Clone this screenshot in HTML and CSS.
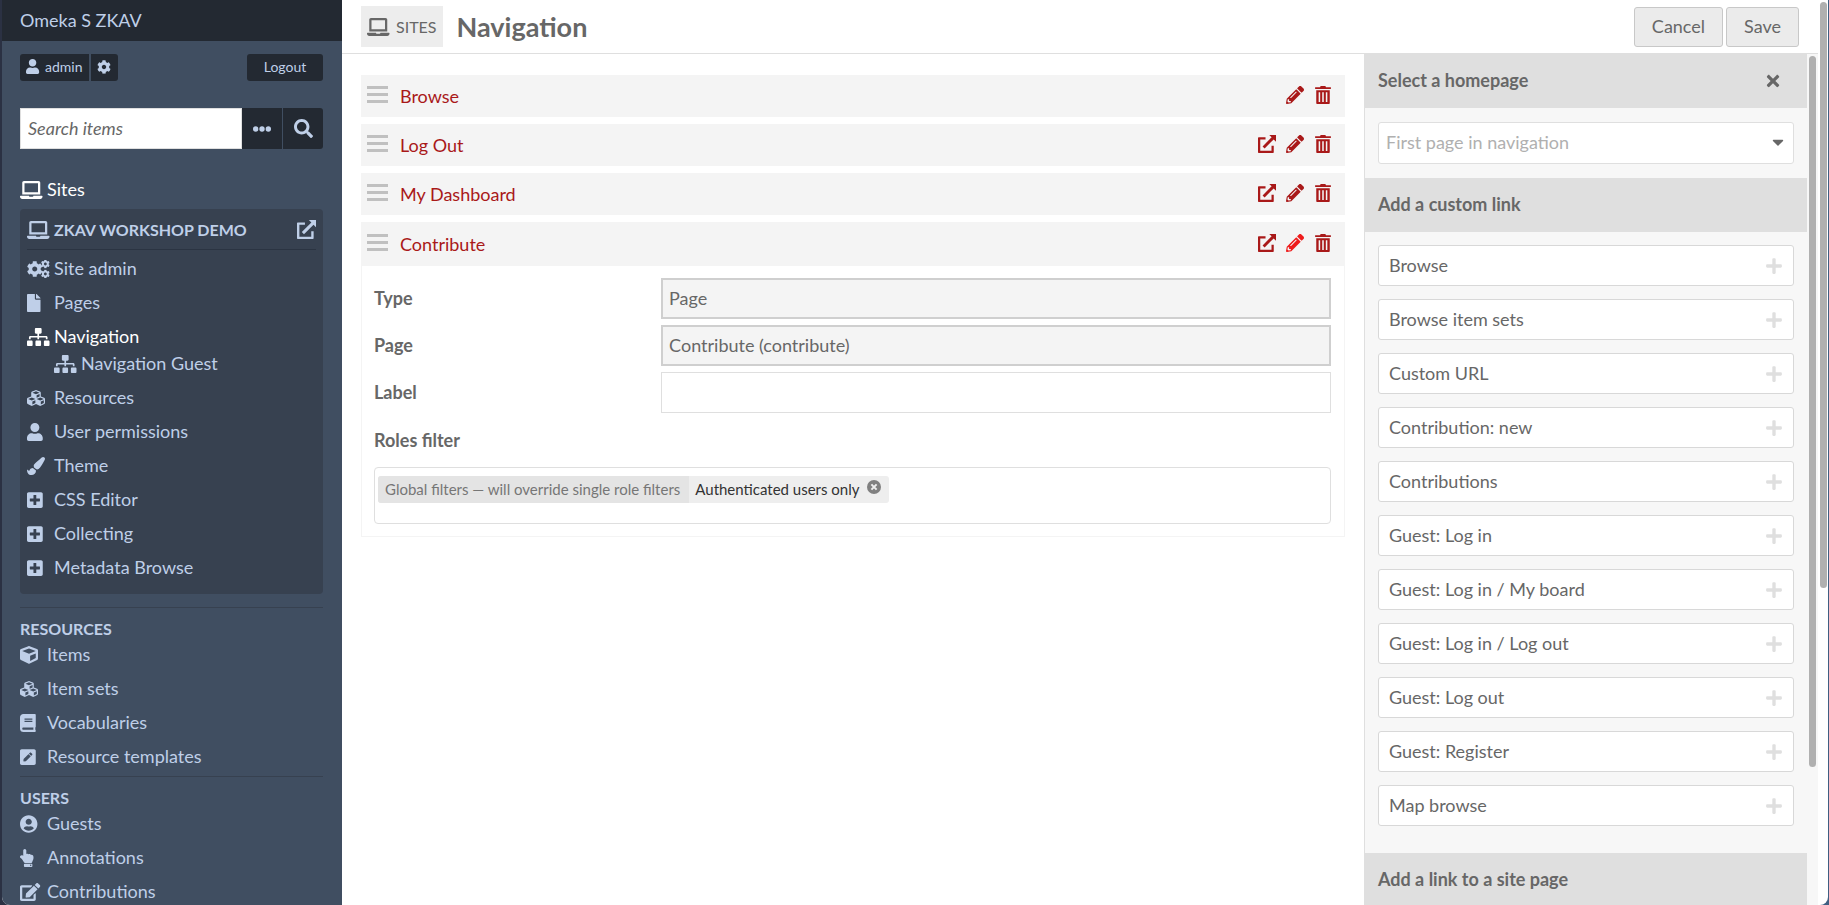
FILE: index.html
```
<!DOCTYPE html>
<html lang="en">
<head>
    <meta charset="UTF-8">
    <meta name="viewport" content="width=device-width, initial-scale=1.0">
    <title>Navigation - Omeka S ZKAV</title>
    <link rel="stylesheet" href="styles.css">
</head>
<body>

    <!-- icon set -->
    <svg class="icon-defs" aria-hidden="true">
        <symbol id="laptop" viewBox="0 0 640 512" preserveAspectRatio="xMinYMid"><path d="M624 416H381.54c-.74 19.81-14.71 32-32.74 32H288c-18.69 0-33.02-17.47-32.77-32H16c-8.8 0-16 7.2-16 16v16c0 35.2 28.8 64 64 64h512c35.2 0 64-28.8 64-64v-16c0-8.8-7.2-16-16-16zM576 48c0-26.4-21.6-48-48-48H112C85.6 0 64 21.6 64 48v336h512V48zm-64 272H128V64h384v256z"/></symbol>
        <symbol id="cog" viewBox="0 0 512 512" preserveAspectRatio="xMinYMid"><path d="M487.4 315.7l-42.6-24.6c4.3-23.2 4.3-47 0-70.2l42.6-24.6c4.9-2.8 7.1-8.6 5.5-14-11.1-35.6-30-67.8-54.7-94.6-3.8-4.1-10-5.1-14.8-2.3L380.8 110c-17.9-15.4-38.5-27.3-60.8-35.1V25.8c0-5.6-3.9-10.5-9.4-11.7-36.7-8.2-74.3-7.8-109.2 0-5.5 1.2-9.4 6.1-9.4 11.7V75c-22.2 7.9-42.8 19.8-60.8 35.1L88.7 85.5c-4.9-2.8-11-1.9-14.8 2.3-24.7 26.7-43.6 58.9-54.7 94.6-1.7 5.4.6 11.2 5.5 14L67.3 221c-4.3 23.2-4.3 47 0 70.2l-42.6 24.6c-4.9 2.8-7.1 8.6-5.5 14 11.1 35.6 30 67.8 54.7 94.6 3.8 4.1 10 5.1 14.8 2.3l42.6-24.6c17.9 15.4 38.5 27.3 60.8 35.1v49.2c0 5.6 3.9 10.5 9.4 11.7 36.7 8.2 74.3 7.8 109.2 0 5.5-1.2 9.4-6.1 9.4-11.7v-49.2c22.2-7.9 42.8-19.8 60.8-35.1l42.6 24.6c4.9 2.8 11 1.9 14.8-2.3 24.7-26.7 43.6-58.9 54.7-94.6 1.5-5.5-.7-11.3-5.6-14.1zM256 336c-44.1 0-80-35.9-80-80s35.9-80 80-80 80 35.9 80 80-35.9 80-80 80z"/></symbol>
        <symbol id="cogs" viewBox="0 0 640 512" preserveAspectRatio="xMinYMid"><use href="#cog" x="-10" y="26" width="460" height="460"/><use href="#cog" x="395" y="-14" width="255" height="255"/><use href="#cog" x="395" y="271" width="255" height="255"/></symbol>
        <symbol id="user" viewBox="0 0 448 512" preserveAspectRatio="xMinYMid"><path d="M224 256c70.7 0 128-57.3 128-128S294.7 0 224 0 96 57.3 96 128s57.3 128 128 128zm89.6 32h-16.7c-22.2 10.2-46.9 16-72.9 16s-50.6-5.8-72.9-16h-16.7C60.2 288 0 348.2 0 422.4V464c0 26.5 21.5 48 48 48h352c26.5 0 48-21.5 48-48v-41.6c0-74.2-60.2-134.4-134.4-134.4z"/></symbol>
        <symbol id="ellipsis" viewBox="0 0 512 512"><circle cx="76" cy="256" r="76"/><circle cx="256" cy="256" r="76"/><circle cx="436" cy="256" r="76"/></symbol>
        <symbol id="search" viewBox="0 0 512 512"><path d="M505 442.7L405.3 343c-4.5-4.5-10.6-7-17-7H372c27.6-35.3 44-79.7 44-128C416 93.1 322.9 0 208 0S0 93.1 0 208s93.1 208 208 208c48.3 0 92.7-16.4 128-44v16.3c0 6.4 2.5 12.5 7 17l99.7 99.7c9.4 9.4 24.6 9.4 33.9 0l28.3-28.3c9.4-9.4 9.4-24.6.1-34zM208 336c-70.7 0-128-57.2-128-128 0-70.7 57.2-128 128-128 70.7 0 128 57.2 128 128 0 70.7-57.2 128-128 128z"/></symbol>
        <symbol id="external" viewBox="0 0 512 512"><path d="M384 304v144H64V128h150V64H20C8 64 0 72 0 84v408c0 12 8 20 20 20h408c12 0 20-8 20-20V304zM320 0l67 67-257 257 58 58 257-257 67 67V0z"/></symbol>
        <symbol id="file" viewBox="0 0 384 512" preserveAspectRatio="xMinYMid"><path d="M224 136V0H24C10.7 0 0 10.7 0 24v464c0 13.3 10.7 24 24 24h336c13.3 0 24-10.7 24-24V160H248c-13.2 0-24-10.8-24-24zm160-14.1v6.1H256V0h6.1c6.4 0 12.5 2.5 17 7l97.9 98c4.5 4.5 7 10.6 7 16.9z"/></symbol>
        <symbol id="sitemap" viewBox="0 0 640 512" preserveAspectRatio="xMinYMid"><path d="M128 352H32c-17.67 0-32 14.33-32 32v96c0 17.67 14.33 32 32 32h96c17.67 0 32-14.33 32-32v-96c0-17.67-14.33-32-32-32zm-24-80h192v48h48v-48h192v48h48v-57.59c0-21.17-17.23-38.41-38.41-38.41H344v-64h40c17.67 0 32-14.33 32-32V32c0-17.67-14.33-32-32-32H256c-17.67 0-32 14.33-32 32v96c0 17.67 14.33 32 32 32h40v64H94.41C73.23 224 56 241.23 56 262.41V320h48v-48zm264 80h-96c-17.67 0-32 14.33-32 32v96c0 17.67 14.33 32 32 32h96c17.67 0 32-14.33 32-32v-96c0-17.67-14.33-32-32-32zm240 0h-96c-17.67 0-32 14.33-32 32v96c0 17.67 14.33 32 32 32h96c17.67 0 32-14.33 32-32v-96c0-17.67-14.33-32-32-32z"/></symbol>
        <symbol id="cube" viewBox="0 0 512 512" preserveAspectRatio="xMinYMid"><path d="M239.1 6.3l-208 78c-18.7 7-31.1 25-31.1 45v225.1c0 18.2 10.3 34.8 26.5 42.9l208 104c13.5 6.8 29.4 6.8 42.9 0l208-104c16.3-8.1 26.5-24.8 26.5-42.9V129.3c0-20-12.4-37.9-31.1-44.9l-208-78C262 2.2 250 2.2 239.1 6.3zM256 68.4l192 72v1.1l-192 78-192-78v-1.1l192-72zm32 356V275.5l160-65v133.9l-160 80z"/></symbol>
        <symbol id="cubes" viewBox="0 0 512 512" preserveAspectRatio="xMinYMid"><path d="M488.6 250.2L392 214V105.5c0-15-9.3-28.4-23.4-33.7l-100-37.5c-8.1-3.1-17.1-3.1-25.3 0l-100 37.5c-14.1 5.3-23.4 18.7-23.4 33.7V214l-96.6 36.2C9.3 255.5 0 268.9 0 283.9V394c0 13.6 7.7 26.1 19.9 32.2l100 50c10.1 5.1 22.1 5.1 32.2 0l103.9-52 103.9 52c10.1 5.1 22.1 5.1 32.2 0l100-50c12.2-6.1 19.9-18.6 19.9-32.2V283.9c0-15-9.3-28.4-23.4-33.7zM358 214.8l-85 31.9v-68.2l85-37v73.3zM154 104.1l102-38.2 102 38.2v.6l-102 41.4-102-41.4v-.6zm84 291.1l-85 42.5v-79.1l85-38.8v75.4zm0-112l-102 41.4-102-41.4v-.6l102-38.2 102 38.2v.6zm240 112l-85 42.5v-79.1l85-38.8v75.4zm0-112l-102 41.4-102-41.4v-.6l102-38.2 102 38.2v.6z"/></symbol>
        <symbol id="brush" viewBox="0 0 512 512" preserveAspectRatio="xMinYMid"><path d="M167.02 309.34c-40.12 2.58-76.53 17.86-97.19 72.3-2.35 6.21-8 9.98-14.59 9.98-11.11 0-45.46-27.67-55.25-34.35C0 439.62 37.93 512 128 512c75.86 0 128-43.77 128-120.19 0-3.11-.65-6.08-.97-9.13l-88.01-73.34zM457.89 0c-15.16 0-29.37 6.71-40.21 16.45C213.27 199.05 192 203.34 192 257.09c0 13.7 3.25 26.76 8.73 38.7l63.82 53.18c7.21 1.8 14.64 3.03 22.39 3.03 62.11 0 98.11-45.47 211.16-256.46 7.38-14.35 13.9-29.85 13.9-45.99C512 20.64 486 0 457.89 0z"/></symbol>
        <symbol id="plus-square" viewBox="0 0 448 512" preserveAspectRatio="xMinYMid"><path d="M400 32H48C21.5 32 0 53.5 0 80v352c0 26.5 21.5 48 48 48h352c26.5 0 48-21.5 48-48V80c0-26.5-21.5-48-48-48zm-32 252c0 6.6-5.4 12-12 12h-92v92c0 6.6-5.4 12-12 12h-56c-6.6 0-12-5.4-12-12v-92H92c-6.6 0-12-5.4-12-12v-56c0-6.6 5.4-12 12-12h92v-92c0-6.6 5.4-12 12-12h56c6.6 0 12 5.4 12 12v92h92c6.6 0 12 5.4 12 12v56z"/></symbol>
        <symbol id="book" viewBox="0 0 448 512" preserveAspectRatio="xMinYMid"><path d="M448 360V24c0-13.3-10.7-24-24-24H96C43 0 0 43 0 96v320c0 53 43 96 96 96h328c13.3 0 24-10.7 24-24v-16c0-7.5-3.5-14.3-8.9-18.7-4.2-15.4-4.2-59.3 0-74.7 5.4-4.3 8.9-11.1 8.9-18.6zM128 134c0-3.3 2.7-6 6-6h212c3.3 0 6 2.7 6 6v20c0 3.3-2.7 6-6 6H134c-3.3 0-6-2.7-6-6v-20zm0 64c0-3.3 2.7-6 6-6h212c3.3 0 6 2.7 6 6v20c0 3.3-2.7 6-6 6H134c-3.3 0-6-2.7-6-6v-20zm253.4 250H96c-17.7 0-32-14.3-32-32 0-17.6 14.4-32 32-32h285.4c-1.9 17.1-1.9 46.9 0 64z"/></symbol>
        <symbol id="pen-square" viewBox="0 0 448 512" preserveAspectRatio="xMinYMid"><path d="M400 480H48c-26.5 0-48-21.5-48-48V80c0-26.5 21.5-48 48-48h352c26.5 0 48 21.5 48 48v352c0 26.5-21.5 48-48 48zM238.1 177.9L102.4 313.6l-6.3 57.1c-.8 7.6 5.6 14.1 13.3 13.3l57.1-6.3L302.2 242c2.3-2.3 2.3-6.1 0-8.5L246.7 178c-2.5-2.4-6.3-2.4-8.6-.1zM345 165.1L314.9 135c-9.4-9.4-24.6-9.4-33.9 0l-23.1 23.1c-2.3 2.3-2.3 6.1 0 8.5l55.5 55.5c2.3 2.3 6.1 2.3 8.5 0L345 199c9.3-9.3 9.3-24.5 0-33.9z"/></symbol>
        <symbol id="user-circle" viewBox="0 0 496 512" preserveAspectRatio="xMinYMid"><path d="M248 8C111 8 0 119 0 256s111 248 248 248 248-111 248-248S385 8 248 8zm0 96c48.6 0 88 39.4 88 88s-39.4 88-88 88-88-39.4-88-88 39.4-88 88-88zm0 344c-58.7 0-111.3-26.6-146.5-68.2 18.8-35.4 55.6-59.8 98.5-59.8 2.4 0 4.8.4 7.1 1.1 13 4.2 26.6 6.9 40.9 6.9 14.3 0 28-2.7 40.9-6.9 2.3-.7 4.7-1.1 7.1-1.1 42.9 0 79.7 24.4 98.5 59.8C359.3 421.4 306.7 448 248 448z"/></symbol>
        <symbol id="hand" viewBox="0 0 384 512" preserveAspectRatio="xMinYMid"><path d="M135.652 0c23.625 0 43.826 20.65 43.826 44.8v99.851c17.048-16.34 49.766-18.346 70.944 6.299 22.829-14.288 53.017-2.147 62.315 16.45C361.878 158.426 384 189.346 384 240c0 2.746-.203 13.276-.195 16 .168 61.971-31.065 76.894-38.315 123.731C343.683 391.404 333.599 400 321.786 400H150.261l-.001-.002c-18.366-.011-35.889-10.607-43.845-28.464C93.421 342.648 57.377 276.122 29.092 264 10.897 256.203.008 242.616 0 224c-.014-34.222 35.098-57.752 66.908-44.119 8.359 3.583 16.67 8.312 24.918 14.153V44.8c0-23.45 20.543-44.8 43.826-44.8zM136 416h192c13.255 0 24 10.745 24 24v48c0 13.255-10.745 24-24 24H136c-13.255 0-24-10.745-24-24v-48c0-13.255 10.745-24 24-24zm168 28c-11.046 0-20 8.954-20 20s8.954 20 20 20 20-8.954 20-20-8.954-20-20-20z"/></symbol>
        <symbol id="edit" viewBox="0 0 576 512" preserveAspectRatio="xMinYMid"><path d="M402.6 83.2l90.2 90.2c3.8 3.8 3.8 10 0 13.8L274.4 405.6l-92.8 10.3c-12.4 1.4-22.9-9.1-21.5-21.5l10.3-92.8L388.8 83.2c3.8-3.8 10-3.8 13.8 0zm162-22.9l-48.8-48.8c-15.2-15.2-39.9-15.2-55.2 0l-35.4 35.4c-3.8 3.8-3.8 10 0 13.8l90.2 90.2c3.8 3.8 10 3.8 13.8 0l35.4-35.4c15.2-15.3 15.2-40 0-55.2zM384 346.2V448H64V128h229.8c3.2 0 6.2-1.3 8.5-3.5l40-40c7.6-7.6 2.2-20.5-8.5-20.5H48C21.5 64 0 85.5 0 112v352c0 26.5 21.5 48 48 48h352c26.5 0 48-21.5 48-48V306.2c0-10.7-12.9-16-20.5-8.5l-40 40c-2.2 2.3-3.5 5.3-3.5 8.5z"/></symbol>
        <symbol id="pencil" viewBox="0 0 512 512"><path d="M497.9 142.1l-46.1 46.1c-4.7 4.7-12.3 4.7-17 0l-111-111c-4.7-4.7-4.7-12.3 0-17l46.1-46.1c18.7-18.7 49.1-18.7 67.9 0l60.1 60.1c18.8 18.7 18.8 49.1 0 67.9zM284.2 99.8L21.6 362.4.4 483.9c-2.9 16.4 11.4 30.6 27.8 27.8l121.5-21.3 262.6-262.6c4.7-4.7 4.7-12.3 0-17l-111-111c-4.8-4.7-12.4-4.7-17.1 0zM124.1 339.9c-5.5-5.5-5.5-14.3 0-19.8l154-154c5.5-5.5 14.3-5.5 19.8 0s5.5 14.3 0 19.8l-154 154c-5.5 5.5-14.3 5.5-19.8 0zM88 424h48v36.3l-64.5 11.3-31.1-31.1L51.7 376H88v48z"/></symbol>
        <symbol id="trash" viewBox="0 0 448 512"><path d="M0 32h140l16-32h136l16 32h140v54H0zM32 120h384v368c0 14-10 24-24 24H56c-14 0-24-10-24-24zM100 178v276h44V178zM202 178v276h44V178zM304 178v276h44V178z" fill-rule="evenodd"/></symbol>
        <symbol id="times" viewBox="0 0 352 512"><path d="M242.72 256l100.07-100.07c12.28-12.28 12.28-32.19 0-44.48l-22.24-22.24c-12.28-12.28-32.19-12.28-44.48 0L176 189.28 75.93 89.21c-12.28-12.28-32.19-12.28-44.48 0L9.21 111.45c-12.28 12.28-12.28 32.19 0 44.48L109.28 256 9.21 356.07c-12.28 12.28-12.28 32.19 0 44.48l22.24 22.24c12.28 12.28 32.2 12.28 44.48 0L176 322.72l100.07 100.07c12.28 12.28 32.2 12.28 44.48 0l22.24-22.24c12.28-12.28 12.28-32.19 0-44.48L242.72 256z"/></symbol>
        <symbol id="plus" viewBox="0 0 448 512"><path d="M416 208H272V64c0-17.67-14.33-32-32-32h-32c-17.67 0-32 14.33-32 32v144H32c-17.67 0-32 14.33-32 32v32c0 17.67 14.33 32 32 32h144v144c0 17.67 14.33 32 32 32h32c17.67 0 32-14.33 32-32V304h144c17.67 0 32-14.33 32-32v-32c0-17.67-14.33-32-32-32z"/></symbol>
        <symbol id="caret" viewBox="0 0 320 512"><path d="M31.3 192h257.3c17.8 0 26.7 21.5 14.1 34.1L174.1 354.8c-7.8 7.8-20.5 7.8-28.3 0L17.2 226.1C4.6 213.5 13.5 192 31.3 192z"/></symbol>
        <symbol id="handle" viewBox="0 0 21 18"><path d="M0 0h21v3H0zM0 7h21v3H0zM0 14h21v3H0z"/></symbol>
        <symbol id="close-round" viewBox="0 0 14 14"><circle cx="7" cy="7" r="7"/><path d="M4.4 4.4l5.2 5.2M9.6 4.4L4.4 9.6" stroke="#eee" stroke-width="2"/></symbol>
    </svg>

    <div class="app">
        <aside class="sidebar">
            <div class="brand"><a href="#">Omeka S ZKAV</a></div>

            <div class="sidebar-content">
                <div class="user-bar">
                    <div class="user-links">
                        <a href="#" class="button user-name"><svg class="icon-user"><use href="#user"/></svg>admin</a>
                        <a href="#" class="button user-settings" aria-label="Settings"><svg class="icon-small"><use href="#cog"/></svg></a>
                    </div>
                    <a href="#" class="button logout">Logout</a>
                </div>

                <form class="search">
                    <input type="text" placeholder="Search items" aria-label="Search items">
                    <button type="button" aria-label="Advanced search"><svg class="icon-square"><use href="#ellipsis"/></svg></button>
                    <button type="submit" aria-label="Search"><svg class="icon-large"><use href="#search"/></svg></button>
                </form>

                <nav>
                    <a href="#" class="nav-link active sites-link"><svg class="icon"><use href="#laptop"/></svg>Sites</a>

                    <div class="site-menu">
                        <div class="site-title">
                            <a href="#" class="nav-link"><svg class="icon"><use href="#laptop"/></svg>ZKAV WORKSHOP DEMO</a>
                            <a href="#" class="site-view" aria-label="View site"><svg class="icon-large"><use href="#external"/></svg></a>
                        </div>
                        <ul>
                            <li><a href="#" class="nav-link"><svg class="icon"><use href="#cogs"/></svg>Site admin</a></li>
                            <li><a href="#" class="nav-link"><svg class="icon"><use href="#file"/></svg>Pages</a></li>
                            <li>
                                <a href="#" class="nav-link active"><svg class="icon"><use href="#sitemap"/></svg>Navigation</a>
                                <a href="#" class="nav-link sub"><svg class="icon"><use href="#sitemap"/></svg>Navigation Guest</a>
                            </li>
                            <li><a href="#" class="nav-link"><svg class="icon"><use href="#cubes"/></svg>Resources</a></li>
                            <li><a href="#" class="nav-link"><svg class="icon"><use href="#user"/></svg>User permissions</a></li>
                            <li><a href="#" class="nav-link"><svg class="icon"><use href="#brush"/></svg>Theme</a></li>
                            <li><a href="#" class="nav-link"><svg class="icon"><use href="#plus-square"/></svg>CSS Editor</a></li>
                            <li><a href="#" class="nav-link"><svg class="icon"><use href="#plus-square"/></svg>Collecting</a></li>
                            <li><a href="#" class="nav-link"><svg class="icon"><use href="#plus-square"/></svg>Metadata Browse</a></li>
                        </ul>
                    </div>

                    <div class="menu-group">
                        <h4>RESOURCES</h4>
                        <ul>
                            <li><a href="#" class="nav-link"><svg class="icon"><use href="#cube"/></svg>Items</a></li>
                            <li><a href="#" class="nav-link"><svg class="icon"><use href="#cubes"/></svg>Item sets</a></li>
                            <li><a href="#" class="nav-link"><svg class="icon"><use href="#book"/></svg>Vocabularies</a></li>
                            <li><a href="#" class="nav-link"><svg class="icon"><use href="#pen-square"/></svg>Resource templates</a></li>
                        </ul>
                    </div>

                    <div class="menu-group">
                        <h4>USERS</h4>
                        <ul>
                            <li><a href="#" class="nav-link"><svg class="icon"><use href="#user-circle"/></svg>Guests</a></li>
                            <li><a href="#" class="nav-link"><svg class="icon"><use href="#hand"/></svg>Annotations</a></li>
                            <li><a href="#" class="nav-link"><svg class="icon"><use href="#edit"/></svg>Contributions</a></li>
                        </ul>
                    </div>
                </nav>
            </div>
        </aside>

        <main class="main">
            <header class="page-header">
                <a href="#" class="section-badge"><svg class="icon"><use href="#laptop"/></svg>SITES</a>
                <h1>Navigation</h1>
                <div class="page-actions">
                    <button type="button">Cancel</button>
                    <button type="submit">Save</button>
                </div>
            </header>

            <div class="columns">
                <section class="content">
                    <div class="link-row">
                        <svg class="handle"><use href="#handle"/></svg>
                        <a href="#" class="link-name">Browse</a>
                        <a href="#" aria-label="Edit"><svg class="icon-square"><use href="#pencil"/></svg></a>
                        <a href="#" aria-label="Delete"><svg class="icon-square"><use href="#trash"/></svg></a>
                    </div>
                    <div class="link-row">
                        <svg class="handle"><use href="#handle"/></svg>
                        <a href="#" class="link-name">Log Out</a>
                        <a href="#" aria-label="View"><svg class="icon-square"><use href="#external"/></svg></a>
                        <a href="#" aria-label="Edit"><svg class="icon-square"><use href="#pencil"/></svg></a>
                        <a href="#" aria-label="Delete"><svg class="icon-square"><use href="#trash"/></svg></a>
                    </div>
                    <div class="link-row">
                        <svg class="handle"><use href="#handle"/></svg>
                        <a href="#" class="link-name">My Dashboard</a>
                        <a href="#" aria-label="View"><svg class="icon-square"><use href="#external"/></svg></a>
                        <a href="#" aria-label="Edit"><svg class="icon-square"><use href="#pencil"/></svg></a>
                        <a href="#" aria-label="Delete"><svg class="icon-square"><use href="#trash"/></svg></a>
                    </div>
                    <div class="link-item">
                        <div class="link-row">
                            <svg class="handle"><use href="#handle"/></svg>
                            <a href="#" class="link-name">Contribute</a>
                            <a href="#" aria-label="View"><svg class="icon-square"><use href="#external"/></svg></a>
                            <a href="#" class="editing" aria-label="Edit"><svg class="icon-square"><use href="#pencil"/></svg></a>
                            <a href="#" aria-label="Delete"><svg class="icon-square"><use href="#trash"/></svg></a>
                        </div>
                        <form class="link-form">
                            <div class="field">
                                <label for="type">Type</label>
                                <input type="text" id="type" value="Page" readonly>
                            </div>
                            <div class="field">
                                <label for="page">Page</label>
                                <input type="text" id="page" value="Contribute (contribute)" readonly>
                            </div>
                            <div class="field">
                                <label for="label">Label</label>
                                <input type="text" id="label">
                            </div>
                            <div class="roles-label">Roles filter</div>
                            <div class="roles">
                                <div class="chip">
                                    <span class="chip-group">Global filters — will override single role filters</span>
                                    <span class="chip-name">Authenticated users only</span>
                                    <button type="button" aria-label="Remove"><svg class="icon-small"><use href="#close-round"/></svg></button>
                                </div>
                            </div>
                        </form>
                    </div>
                </section>

                <aside class="panel">
                    <div class="panel-body">
                        <div class="panel-title">
                            <h3>Select a homepage</h3>
                            <button type="button" class="close" aria-label="Close"><svg class="icon-square"><use href="#times"/></svg></button>
                        </div>
                        <div class="homepage">
                            <select aria-label="Select a homepage">
                                <option>First page in navigation</option>
                            </select>
                            <svg class="caret"><use href="#caret"/></svg>
                        </div>
                        <div class="panel-title"><h3>Add a custom link</h3></div>
                        <div class="link-types">
                            <button type="button">Browse<svg class="icon-square"><use href="#plus"/></svg></button>
                            <button type="button">Browse item sets<svg class="icon-square"><use href="#plus"/></svg></button>
                            <button type="button">Custom URL<svg class="icon-square"><use href="#plus"/></svg></button>
                            <button type="button">Contribution: new<svg class="icon-square"><use href="#plus"/></svg></button>
                            <button type="button">Contributions<svg class="icon-square"><use href="#plus"/></svg></button>
                            <button type="button">Guest: Log in<svg class="icon-square"><use href="#plus"/></svg></button>
                            <button type="button">Guest: Log in / My board<svg class="icon-square"><use href="#plus"/></svg></button>
                            <button type="button">Guest: Log in / Log out<svg class="icon-square"><use href="#plus"/></svg></button>
                            <button type="button">Guest: Log out<svg class="icon-square"><use href="#plus"/></svg></button>
                            <button type="button">Guest: Register<svg class="icon-square"><use href="#plus"/></svg></button>
                            <button type="button">Map browse<svg class="icon-square"><use href="#plus"/></svg></button>
                        </div>
                        <div class="panel-title"><h3>Add a link to a site page</h3></div>
                    </div>
                    <div class="scrollbar panel-scroll"><div class="thumb"></div></div>
                </aside>
            </div>
        </main>

        <div class="scrollbar page-scroll"><div class="thumb"></div></div>
    </div>

</body>
</html>
```
FILE: styles.css
```
* {
    box-sizing: border-box;
}
body {
    margin: 0;
    padding: 0 1px 0 2px;
    background: linear-gradient(to right, #2b3143, #3f5f82);
    color: #676767;
    font-family: Lato, "Liberation Sans", sans-serif;
    font-size: 18px;
    line-height: 27px;
}
a {
    color: #a91919;
    text-decoration: none;
}
button, input, select {
    font: inherit;
    color: inherit;
    margin: 0;
}
button {
    cursor: pointer;
}
ul {
    list-style: none;
    margin: 0;
    padding: 0;
}
h1, h3, h4 {
    margin: 0;
}
svg {
    display: block;
    flex: none;
    fill: currentColor;
}
.icon-defs {
    position: absolute;
    width: 0;
    height: 0;
}
.icon {
    width: 23px;
    height: 18px;
    margin-right: 4px;
}
.icon-square {
    width: 18px;
    height: 18px;
}
.icon-large {
    width: 19px;
    height: 19px;
}
.icon-small {
    width: 14px;
    height: 14px;
}
.icon-user {
    width: 14px;
    height: 15px;
    margin-right: 5px;
}
.app {
    display: flex;
    height: 100vh;
    overflow: hidden;
    background: #fff;
    border-radius: 0 0 8px 8px;
}

/* left menu */
.sidebar {
    flex: none;
    width: 340px;
    background: #404e61;
    overflow: hidden;
}
.sidebar a {
    color: #bfcfe8;
}
.brand {
    padding: 7px 18px;
    background: #232932;
}
.sidebar-content {
    padding: 13px 19px 0 18px;
}
.user-bar {
    display: flex;
    justify-content: space-between;
    margin-bottom: 27px;
}
.user-links {
    display: flex;
    gap: 2px;
}
.button {
    display: flex;
    align-items: center;
    justify-content: center;
    height: 27px;
    padding-bottom: 2px;
    background: #232932;
    border-radius: 3px;
    font-size: 14px;
}
.user-name {
    padding: 0 6px 2px;
    border-radius: 3px 0 0 3px;
}
.user-settings {
    width: 27px;
    border-radius: 0 3px 3px 0;
}
.logout {
    width: 76px;
}
.search {
    display: flex;
    height: 41px;
    margin-bottom: 27px;
}
.search input {
    flex: 1;
    min-width: 0;
    padding: 0 7px;
    border: 1px solid #dfdfdf;
    background: #fff;
}
.search input::placeholder {
    color: #676767;
    font-style: italic;
}
.search button {
    display: flex;
    align-items: center;
    justify-content: center;
    width: 40px;
    padding: 0;
    border: 0;
    background: #232932;
    color: #bfcfe8;
}
.search button + button {
    width: 41px;
    border-left: 1px solid #404e61;
    border-radius: 0 3px 3px 0;
}
.nav-link {
    display: flex;
    align-items: center;
}
.sidebar .active {
    color: #fff;
}
.sites-link {
    margin-bottom: 6px;
}
.site-menu {
    margin-bottom: 13px;
    padding: 7px 7px 6px;
    background: #374150;
    border-radius: 4px;
}
.site-title {
    display: flex;
    align-items: center;
    justify-content: space-between;
    margin-bottom: 5px;
    padding-bottom: 6px;
    border-bottom: 1px solid #2b3442;
    font-size: 16px;
    font-weight: bold;
}
.sidebar li {
    margin-bottom: 7px;
}
.nav-link.sub {
    padding-left: 27px;
}
.menu-group {
    padding-top: 8px;
    border-top: 1px solid #374150;
}
.menu-group h4 {
    color: #bfcfe8;
    font-size: 16px;
    line-height: 25px;
}
.menu-group li:last-child {
    margin-bottom: 6px;
}

/* page header */
.main {
    flex: 1;
    min-width: 0;
    display: flex;
    flex-direction: column;
}
.page-header {
    display: flex;
    align-items: center;
    height: 54px;
    padding: 0 19px;
    border-bottom: 1px solid #dfdfdf;
}
.section-badge {
    display: flex;
    align-items: center;
    height: 41px;
    padding: 0 6px;
    background: #ededed;
    color: #676767;
    font-size: 16px;
}
.section-badge .icon {
    margin-right: 6px;
}
.page-header h1 {
    flex: 1;
    margin-left: 14px;
    padding-bottom: 1px;
    font-size: 27px;
}
.page-actions {
    display: flex;
    gap: 3px;
}
.page-actions button {
    height: 40px;
    padding: 0 17px;
    border: 1px solid #c8c8c8;
    border-radius: 3px;
    background: #ebebeb;
}

/* navigation links */
.columns {
    flex: 1;
    min-height: 0;
    display: flex;
}
.content {
    flex: 1;
    min-width: 0;
    padding: 21px 19px;
}
.link-row {
    display: flex;
    align-items: center;
    gap: 10px;
    height: 42px;
    margin-bottom: 7px;
    padding: 0 13px 0 6px;
    background: #f4f4f4;
}
.link-row svg {
    margin-bottom: 3px;
}
.handle {
    width: 21px;
    height: 18px;
    color: #c0c0c0;
}
.link-name {
    flex: 1;
    padding-left: 2px;
}
.editing {
    color: #ee1c1c;
}
.link-item {
    border: 1px solid #f4f4f4;
    border-top: 0;
}
.link-item .link-row {
    height: 44px;
    margin: 0 -1px;
}
.link-form {
    padding: 12px 13px 12px 12px;
}
.field {
    display: flex;
    margin-bottom: 6px;
}
.field label {
    width: 30%;
    padding-top: 7px;
    font-weight: bold;
}
.field input {
    flex: 1;
    height: 41px;
    padding: 0 6px 2px;
    border: 1px solid #dfdfdf;
    background: #fff;
}
.field input:read-only {
    border: 2px solid #cfcfcf;
    background: #f4f4f4;
}
.roles-label {
    margin: 14px 0 13px;
    font-weight: bold;
}
.roles {
    height: 57px;
    padding: 7px 3px;
    border: 1px solid #dfdfdf;
    border-radius: 4px;
}
.chip {
    display: inline-flex;
    height: 27px;
    border-radius: 3px;
    background: #eee;
    color: #333;
    font-size: 15px;
    overflow: hidden;
}
.chip-group {
    padding: 0 9px 0 7px;
    background: #e4e4e4;
    color: #767676;
}
.chip-name {
    padding: 0 7px 0 6px;
}
.chip button {
    align-self: flex-start;
    margin: 4px 8px 0 0;
    padding: 0;
    border: 0;
    background: none;
    color: #808080;
}

/* right panel */
.panel {
    flex: none;
    width: 454px;
    display: flex;
    border-left: 1px solid #dfdfdf;
    background: #f7f7f7;
}
.panel-body {
    flex: 1;
    overflow: hidden;
}
.panel-title {
    display: flex;
    align-items: center;
    justify-content: space-between;
    height: 54px;
    padding: 0 13px 1px;
    background: #dfdfdf;
}
.panel-title h3 {
    font-size: 18px;
}
.close {
    margin-right: 12px;
    padding: 0;
    border: 0;
    background: none;
}
.homepage {
    position: relative;
    padding: 14px 13px;
}
.homepage select {
    display: block;
    width: 100%;
    height: 42px;
    padding: 0 7px 2px;
    border: 1px solid #dfdfdf;
    border-radius: 3px;
    appearance: none;
    background: #fff;
    color: #b0b0b0;
}
.caret {
    position: absolute;
    top: 25px;
    right: 23px;
    width: 12px;
    height: 18px;
    pointer-events: none;
}
.link-types {
    display: flex;
    flex-direction: column;
    gap: 13px;
    padding: 13px 13px 27px;
}
.link-types button {
    display: flex;
    align-items: center;
    justify-content: space-between;
    height: 41px;
    padding: 0 10px;
    border: 1px solid #d8d8d8;
    border-radius: 3px;
    background: #fff;
}
.link-types svg {
    color: #dfdfdf;
}

/* scrollbars */
.scrollbar {
    flex: none;
    padding: 2px;
}
.thumb {
    width: 7px;
    border-radius: 4px;
    background: #b0b0b0;
}
.panel-scroll {
    width: 11px;
}
.panel-scroll .thumb {
    height: 84%;
}
.page-scroll {
    width: 10px;
}
.page-scroll .thumb {
    height: 65%;
}
```
